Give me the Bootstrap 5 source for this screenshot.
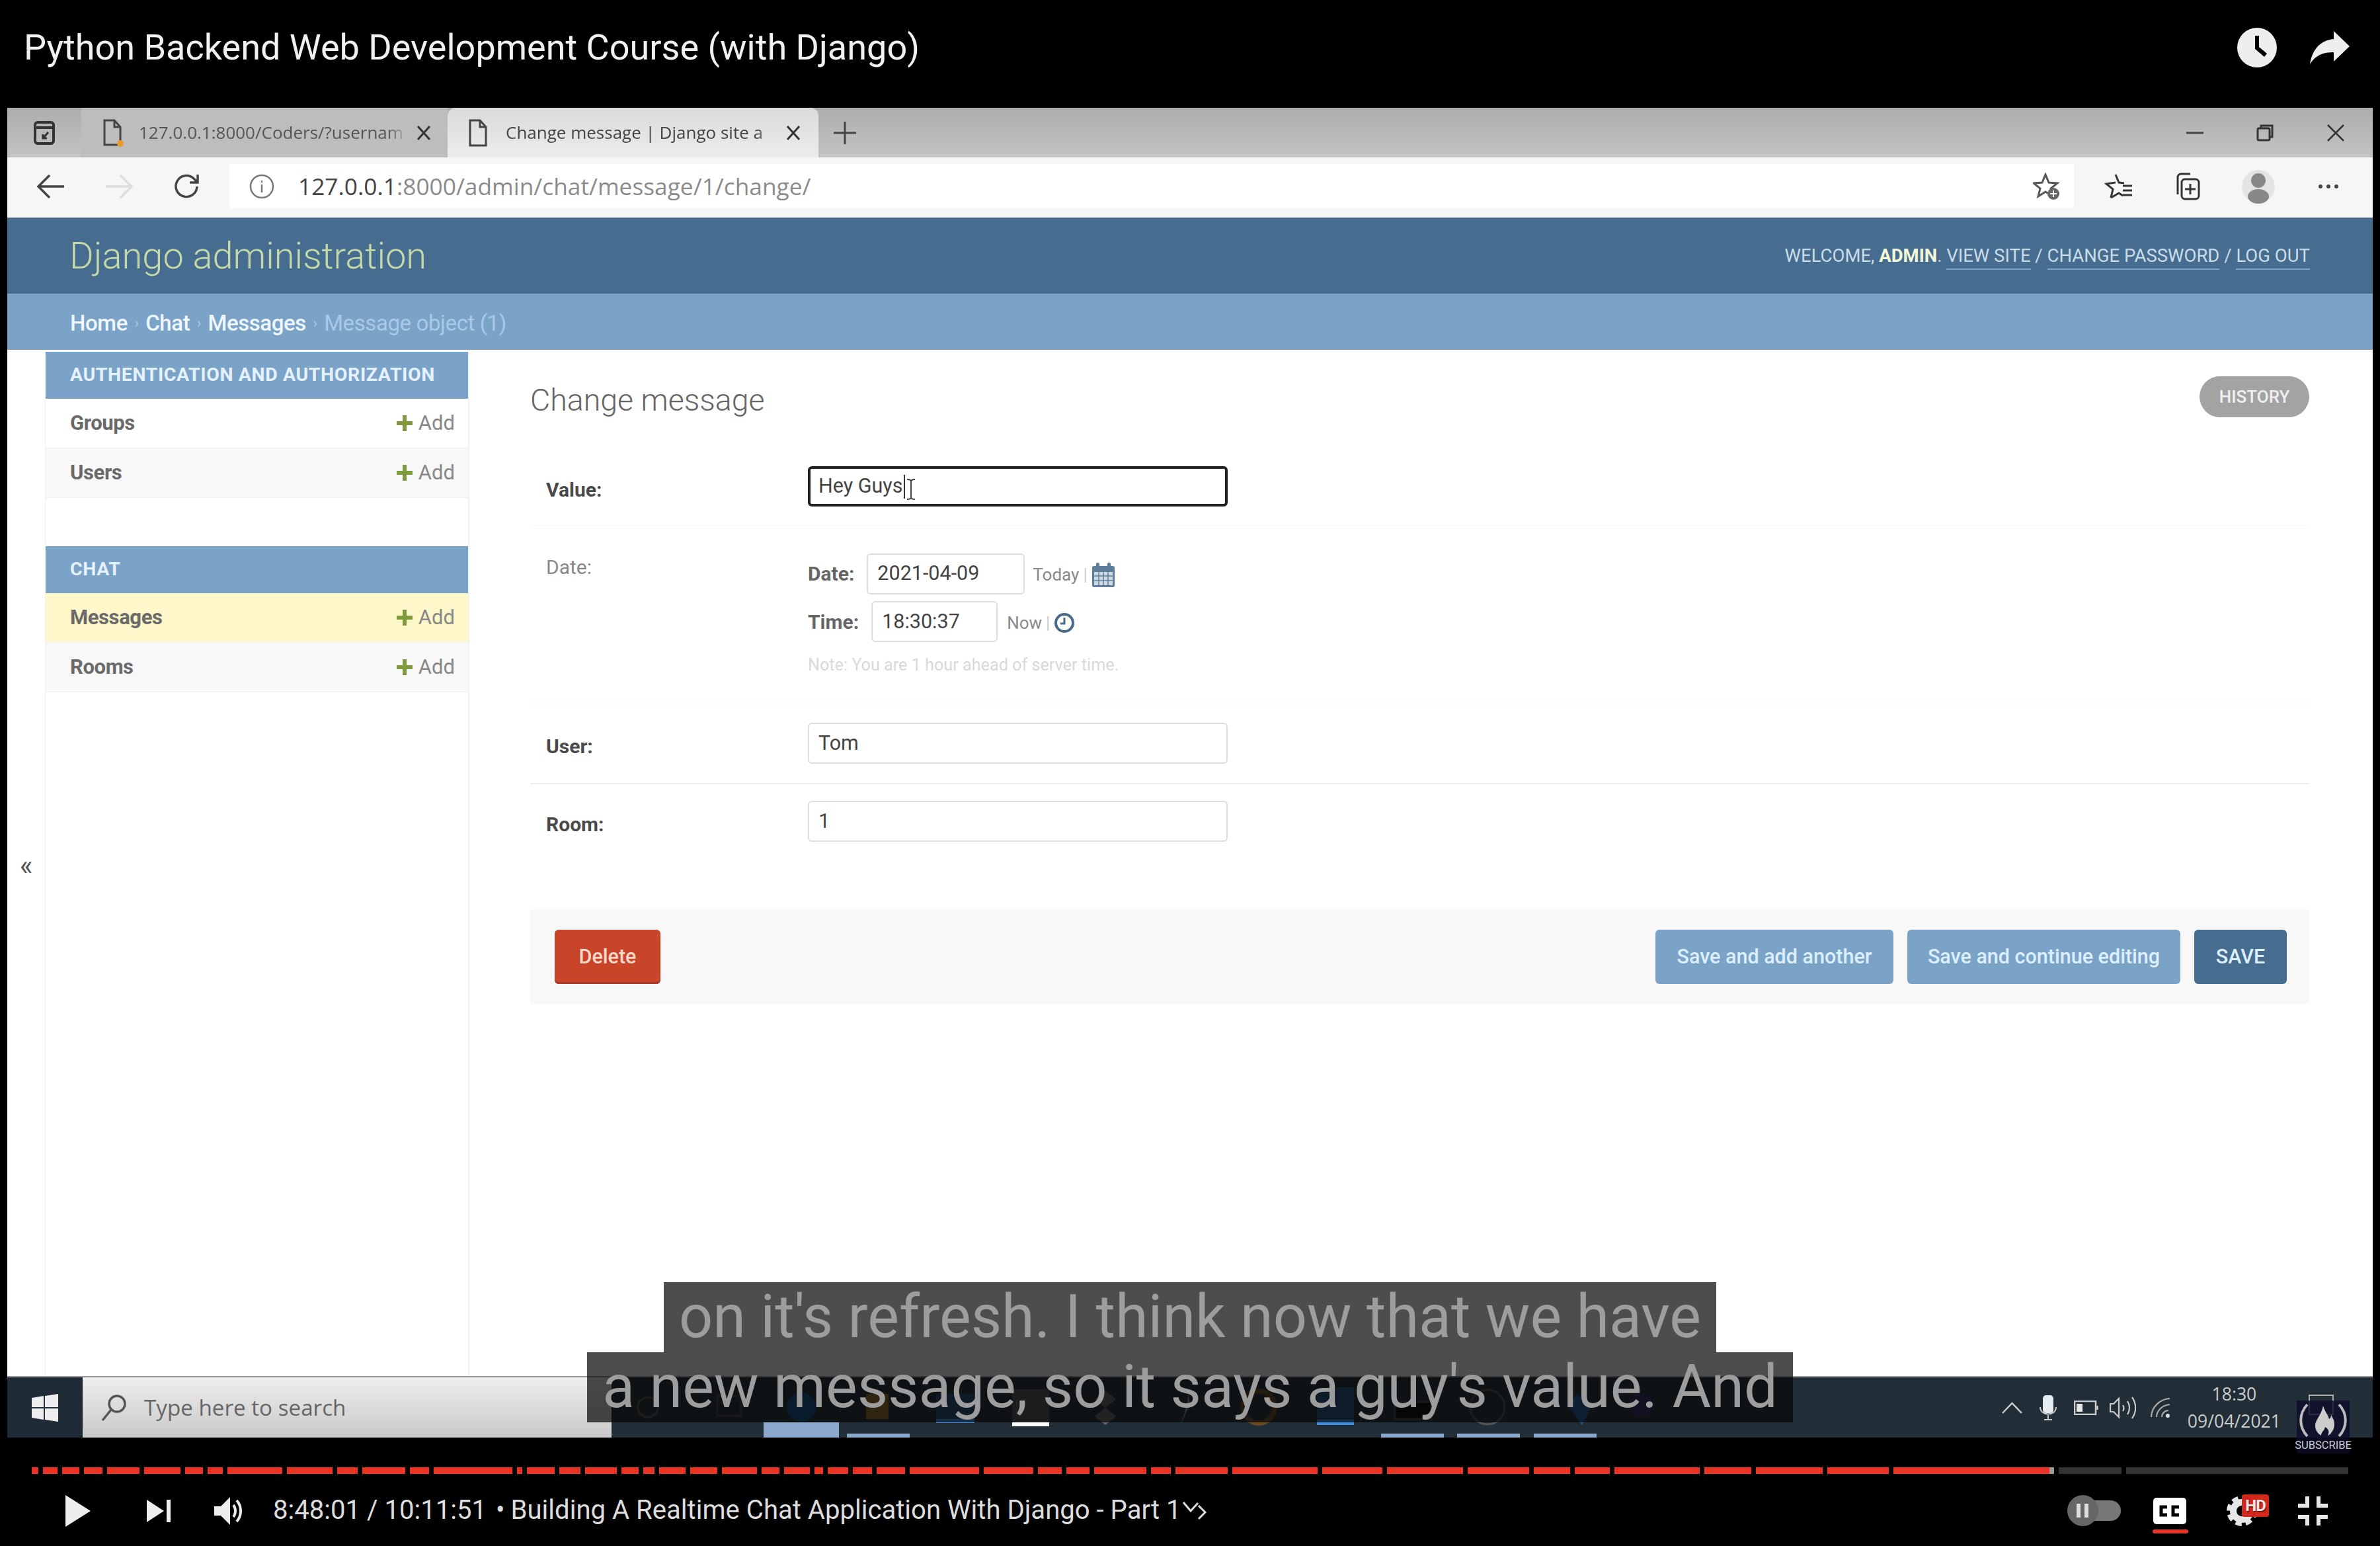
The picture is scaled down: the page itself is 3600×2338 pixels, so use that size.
<!DOCTYPE html>
<html lang="en">
<head>
<meta charset="utf-8">
<title>Python Backend Web Development Course (with Django)</title>
<link href="https://cdn.jsdelivr.net/npm/bootstrap@5.3.0/dist/css/bootstrap.min.css" rel="stylesheet">
<style>
html,body{margin:0;background:#000;}
body{width:3600px;height:2338px;overflow:hidden;font-family:Roboto,"Liberation Sans",sans-serif;position:relative;color:#444;}
.yt-title{height:163px;padding:0 36px 20px;color:#f1f1f1;font-size:54px;}
.yt-top-icons{gap:50px;padding-right:10px;}
.shell{margin:0 11px;height:2011px;background:#fff;}
.tabstrip{height:75px;background:linear-gradient(#adadad,#c4c4c4);}
.tabstrip-left{width:112px;padding-left:40px;}
.win-tab{height:75px;font-family:"Open Sans","Noto Sans",sans-serif;font-size:26px;color:#555;white-space:nowrap;}
.win-tab-off{width:554px;background:#bdbdbd;padding:0 25px 0 32px;}
.win-tab-on{width:561px;background:linear-gradient(#dadada,#ececec);border-radius:12px 12px 0 0;padding:0 27px 0 31px;color:#444;}
.tab-text{overflow:hidden;flex:1;margin:0 12px 0 23px;-webkit-mask-image:linear-gradient(90deg,#000 92%,transparent);mask-image:linear-gradient(90deg,#000 92%,transparent);}
.win-tab-on .tab-text{margin-left:27px;}
.new-tab{margin-left:23px;}
.win-btns{margin-left:auto;gap:80px;padding-right:42px;}
.addrbar{height:91px;background:#f6f6f6;padding:10px 0 14px;}
.nav-icons{width:336px;padding-left:44px;gap:59px;}
.urlbox{flex:1;background:#fff;font-family:"Open Sans","Noto Sans",sans-serif;font-size:35.3px;color:#8b8b8b;padding:0 20px 0 30px;}
.urlbox b{font-weight:400;color:#444;}
.url-info{margin-right:36px;}
.tool-icons{width:452px;gap:61px;padding-left:46px;}
.dj-head{height:115px;background:#466c8f;padding:0 95px 0 94px;}
.dj-brand{font-size:56px;font-weight:300;color:#c4d9a7;margin:0;line-height:1;}
.dj-user{font-size:27.5px;color:#c9dde8;text-transform:uppercase;white-space:nowrap;}
.dj-user strong{color:#f2f7d8;font-weight:700;}
.dj-user a{color:#c9dde8;text-decoration:none;border-bottom:2px solid #7aa3c7;padding-bottom:3px;}
.dj-crumb{height:85px;background:#7aa3c7;padding:4px 95px 0;font-size:33px;color:#a9c9e6;letter-spacing:-.4px;}
.dj-crumb a{color:#eef6ff;text-decoration:none;font-weight:500;}
.dj-crumb i{font-style:normal;font-size:22px;margin:0 10.5px;color:#a9c9e6;}
.dj-body{flex:1;min-height:0;}
.nav-toggle{width:58px;color:#555;font-size:42px;border-right:1px solid #f0f0f0;}
.toggle-mark{margin-top:748px;}
.side{width:641px;border-right:2px solid #f1f1f1;padding-top:3px;}
.side-head{height:71px;background:#7ba3c7;padding-left:37px;font-size:28.5px;font-weight:700;color:#e4f1ff;letter-spacing:.58px;text-transform:uppercase;}
.side-row{height:75px;padding:0 20px 0 37px;font-size:31px;font-weight:700;color:#6a6a6a;border-bottom:1px solid #f0f0f0;letter-spacing:-.4px;}
.side-row.even{background:#f8f8f8;}
.side-row.now{background:#fdf7c9;}
.side-add{font-weight:400;color:#888;letter-spacing:0;font-size:31px;gap:9px;}
.side-gap{height:73px;}
.dj-main{flex:1;padding:40px 96px 0 92px;min-width:0;}
.dj-h{font-size:46.5px;font-weight:300;color:#666;margin:10px 0 0;line-height:1;}
.hist-btn{height:62px;width:166px;padding:0;border:0;border-radius:31px;background:#a3a3a3;color:#f0f0f0;font-size:26px;font-weight:500;}
.fset{margin-top:74px;padding-left:24px;}
.frow{border-bottom:2px solid #fafafa;margin-left:-24px;padding-left:24px;}
.lab{width:396px;flex:none;font-size:30px;font-weight:700;color:#4a4a4a;}
.lab-thin{font-weight:400;color:#888;}
.frow-1{height:91px;}
.frow-1 .lab{margin-top:13px;}
.frow-2{height:269px;padding-top:41px;}
.frow-2 .lab{margin-top:-2px;}
.frow-3{height:121px;padding-top:28px;border-bottom-color:#eee;}
.frow-3 .lab{margin-top:13px;}
.frow-4{height:189px;padding-top:25px;border-bottom:0;}
.frow-4 .lab{margin-top:13px;}
.fld{width:635px;height:62px;padding:0 14px;border:2px solid #ddd;border-radius:6px;font-size:30.5px;color:#444;box-shadow:none;display:flex;align-items:center;background:#fff;line-height:1;}
.fld-on{height:61px;border:4px solid #222;padding:0 12px;}
.txt-caret{display:inline-block;width:2px;height:36px;background:#333;margin-left:1px;}
.ibeam{margin-left:2px;margin-top:8px;}
.dt-line{font-size:30px;font-weight:700;color:#666;}
.dt-line .fld{margin-left:16px;margin-right:14px;font-weight:400;}
.dt-date{height:61px;}
.dt-date .fld{width:239px;margin-left:19px;margin-right:12px;}
.dt-time{height:62px;margin-top:11px;}
.dt-time .fld{width:191px;margin-left:19px;}
.dt-link{font-size:26px;font-weight:400;color:#888;gap:6px;margin-top:4px;}
.dt-link em{font-style:normal;color:#ccc;}
.dt-note{font-size:25.2px;color:#d9d9d9;margin-top:16px;font-weight:400;}
.acts{height:143px;padding:0 34px 0 37px;background:#f8f8f8;}
.act-btn{height:82px;padding:0;border:0;border-radius:6px;font-size:30.5px;font-weight:500;color:#dcefff;}
.act-del{width:160px;background:#c8452a;color:#fdd8c8;box-shadow:inset 0 -3px 0 #a93a25;}
.act-a{width:360px;background:#7ba3c7;margin-right:21px;}
.act-b{width:413px;background:#7ba3c7;margin-right:21px;}
.act-s{width:140px;background:#466c8f;}
.taskbar{height:93px;background:#212e38;border-top:2px solid #999;position:relative;}
.win-start{width:114px;background:#1e2b36;}
.searchbox{width:800px;background:linear-gradient(#eeeeee,#c9c9c9);padding-left:27px;gap:26px;font-family:"Open Sans","Noto Sans",sans-serif;font-size:33.2px;color:#666;}
.tray{margin-left:auto;color:#ccc;padding-right:139px;}
.ti-26{margin-left:26px;}
.ti-17{margin-left:17px;}
.ti-21{margin-left:21px;}
.clock-box{font-family:"Open Sans","Noto Sans",sans-serif;font-size:26.6px;text-align:center;line-height:41px;white-space:nowrap;}
.apps{flex:1;min-width:0;}
.yt-foot{height:164px;padding-top:45px;}
.prog{height:10px;margin-left:48px;gap:7px;}
.seg{height:10px;background:#ea3323;flex:none;}
.seg-grey{background:#333;}
.seg-mix{background:linear-gradient(90deg,#ea3323 236px,#999 236px);}
.ctrls{height:109px;padding:2px 79px 0 99px;color:#ddd;}
.ctl-next{margin-left:85px;}
.ctl-vol{margin-left:66px;}
.ctrl-time{font-size:40.1px;margin-left:45px;white-space:nowrap;}
.ctrl-dot{margin:0 9px 0 14px;}
.ctl-chev{margin-left:2px;}
.ctrl-right{margin-left:auto;}
.ctl-cc{margin-left:49px;overflow:visible;}
.ctl-gear{margin-left:61px;}
.ctl-fs{margin-left:62px;}
.caps{position:absolute;left:0;right:0;top:1939px;}
.cap-line{height:106px;background:rgba(8,8,8,.72);color:#9d9d9d;font-size:90px;line-height:106px;padding:0 23px;white-space:nowrap;}
.notif-box{position:absolute;left:3492px;top:2109px;width:38px;height:31px;border:2px solid #aaa;}
.fcc-logo{position:absolute;left:3474px;top:2118px;width:80px;height:80px;background:rgba(12,12,40,.8);color:#ccc;font-size:16.5px;line-height:20px;padding-bottom:2px;}
.hd-tag{position:absolute;left:3391px;top:2260px;width:41px;height:34px;background:#d3271c;color:#f2e4e4;font-size:24px;font-weight:700;border-radius:4px;line-height:34px;text-align:center;letter-spacing:-1px;text-shadow:1px 2px 0 #7a1610;}
</style>
</head>
<body>
<header class="yt-title d-flex align-items-center justify-content-between">
  <div>Python Backend Web Development Course (with Django)</div>
  <div class="yt-top-icons d-flex align-items-center">
    <svg width="60" height="60" viewBox="0 0 60 60"><circle cx="30" cy="30" r="30" fill="#eee"/><path d="M27 12h6v17l12 10-4 5-14-12z" fill="#000"/></svg>
    <svg width="60" height="50" viewBox="0 0 60 50"><path d="M36 0l24 23-24 23V32C20 32 9 36 0 50 3 30 14 14 36 12z" fill="#eee"/></svg>
  </div>
</header>

<div class="shell d-flex flex-column">
  <div class="tabstrip d-flex">
    <div class="tabstrip-left d-flex align-items-center">
      <svg width="32" height="36" viewBox="0 0 32 36" fill="none" stroke="#333" stroke-width="4"><rect x="2" y="2" width="28" height="32" rx="4"/><path d="M2 10h28"/><path d="M22 17l-8 9m0-6v6h6" stroke-width="3"/></svg>
    </div>
    <div class="win-tab win-tab-off d-flex align-items-center">
      <svg width="32" height="44" viewBox="0 0 32 44" fill="none" stroke="#444" stroke-width="3"><path d="M3 3h15l9 10v27H3z"/><path d="M18 3v10h9"/><circle cx="27" cy="38" r="5" fill="#e89a2c" stroke="none"/></svg>
      <span class="tab-text">127.0.0.1:8000/Coders/?usernam</span>
      <svg width="22" height="24" viewBox="0 0 22 24" stroke="#333" stroke-width="3"><path d="M2 2l18 20M20 2L2 22"/></svg>
    </div>
    <div class="win-tab win-tab-on d-flex align-items-center">
      <svg width="30" height="44" viewBox="0 0 30 44" fill="none" stroke="#444" stroke-width="3"><path d="M3 3h15l9 10v28H3z"/><path d="M18 3v10h9"/></svg>
      <span class="tab-text">Change message | Django site a</span>
      <svg width="22" height="24" viewBox="0 0 22 24" stroke="#333" stroke-width="3"><path d="M2 2l18 20M20 2L2 22"/></svg>
    </div>
    <div class="new-tab d-flex align-items-center">
      <svg width="34" height="34" viewBox="0 0 34 34" stroke="#444" stroke-width="3"><path d="M17 0v34M0 17h34"/></svg>
    </div>
    <div class="win-btns d-flex align-items-center">
      <svg width="26" height="26" viewBox="0 0 26 26" stroke="#444" stroke-width="3"><path d="M0 13h26"/></svg>
      <svg width="26" height="26" viewBox="0 0 26 26" fill="none" stroke="#333" stroke-width="3"><rect x="2" y="6" width="18" height="18" rx="2"/><path d="M7 6V2h17v17h-4"/></svg>
      <svg width="28" height="28" viewBox="0 0 28 28" stroke="#333" stroke-width="2.5"><path d="M2 2l24 24M26 2L2 26"/></svg>
    </div>
  </div>

  <div class="addrbar d-flex">
    <div class="nav-icons d-flex align-items-center">
      <svg width="44" height="40" viewBox="0 0 44 40" fill="none" stroke="#444" stroke-width="3.5"><path d="M42 20H3M20 3L3 20l17 17"/></svg>
      <svg width="44" height="40" viewBox="0 0 44 40" fill="none" stroke="#ddd" stroke-width="3.5"><path d="M2 20h39M24 3l17 17-17 17"/></svg>
      <svg width="42" height="42" viewBox="0 0 42 42" fill="none" stroke="#444" stroke-width="3.5"><path d="M37 21a16 16 0 1 1-5-12l6 6M38 3v12H26"/></svg>
    </div>
    <div class="urlbox d-flex align-items-center">
      <svg class="url-info" width="38" height="38" viewBox="0 0 38 38" fill="none" stroke="#777" stroke-width="2.5"><circle cx="19" cy="19" r="17"/><path d="M19 16v12M19 10v3"/></svg>
      <span><b>127.0.0.1</b>:8000/admin/chat/message/1/change/</span>
      <svg class="ms-auto" width="42" height="42" viewBox="0 0 42 42" fill="none" stroke="#555" stroke-width="3"><path d="M19 3l5 12 13 1-10 8 3 12-11-7-11 7 3-12L1 16l13-1z"/><circle cx="31" cy="32" r="9" fill="#666" stroke="none"/><path d="M31 27v10M26 32h10" stroke="#fff" stroke-width="2"/></svg>
    </div>
    <div class="tool-icons d-flex align-items-center">
      <svg width="44" height="42" viewBox="0 0 44 42" fill="none" stroke="#333" stroke-width="3"><path d="M17 3l5 12 8 1M10 38l3-13-10-8 14-2M10 38l12-7 6 4"/><path d="M28 20h14M28 27h14M28 34h14"/></svg>
      <svg width="42" height="44" viewBox="0 0 42 44" fill="none" stroke="#333" stroke-width="3"><path d="M6 34V8a5 5 0 0 1 5-5h14"/><rect x="12" y="11" width="26" height="30" rx="5"/><path d="M25 18v16M17 26h16"/></svg>
      <svg width="50" height="56" viewBox="0 0 50 56"><circle cx="25" cy="28" r="25" fill="#e4e4e4"/><circle cx="25" cy="19" r="11" fill="#888"/><ellipse cx="25" cy="43" rx="16" ry="11" fill="#888"/></svg>
      <svg class="ms-1" width="32" height="8" viewBox="0 0 32 8" fill="#444"><circle cx="4" cy="4" r="3"/><circle cx="16" cy="4" r="3"/><circle cx="28" cy="4" r="3"/></svg>
    </div>
  </div>

  <div class="dj-head d-flex align-items-center justify-content-between">
    <h1 class="dj-brand">Django administration</h1>
    <div class="dj-user">Welcome, <strong>admin</strong>. <a href="#">View site</a> / <a href="#">Change password</a> / <a href="#">Log out</a></div>
  </div>
  <div class="dj-crumb d-flex align-items-center">
    <a href="#">Home</a><i>›</i><a href="#">Chat</a><i>›</i><a href="#">Messages</a><i>›</i><span>Message object (1)</span>
  </div>

  <div class="dj-body d-flex">
    <div class="nav-toggle text-center"><div class="toggle-mark">«</div></div>
    <aside class="side">
      <div class="side-head d-flex align-items-center">Authentication and Authorization</div>
      <div class="side-row d-flex align-items-center justify-content-between"><span>Groups</span>
        <span class="side-add d-flex align-items-center"><svg width="24" height="24" viewBox="0 0 24 24" fill="#7f9a3c"><path d="M9 0h6v9h9v6h-9v9H9v-9H0V9h9z"/></svg>Add</span></div>
      <div class="side-row even d-flex align-items-center justify-content-between"><span>Users</span>
        <span class="side-add d-flex align-items-center"><svg width="24" height="24" viewBox="0 0 24 24" fill="#7f9a3c"><path d="M9 0h6v9h9v6h-9v9H9v-9H0V9h9z"/></svg>Add</span></div>
      <div class="side-gap"></div>
      <div class="side-head d-flex align-items-center">Chat</div>
      <div class="side-row now d-flex align-items-center justify-content-between"><span>Messages</span>
        <span class="side-add d-flex align-items-center"><svg width="24" height="24" viewBox="0 0 24 24" fill="#7f9a3c"><path d="M9 0h6v9h9v6h-9v9H9v-9H0V9h9z"/></svg>Add</span></div>
      <div class="side-row even d-flex align-items-center justify-content-between"><span>Rooms</span>
        <span class="side-add d-flex align-items-center"><svg width="24" height="24" viewBox="0 0 24 24" fill="#7f9a3c"><path d="M9 0h6v9h9v6h-9v9H9v-9H0V9h9z"/></svg>Add</span></div>
    </aside>
    <main class="dj-main">
      <div class="d-flex align-items-center justify-content-between">
        <h2 class="dj-h">Change message</h2>
        <button class="btn hist-btn" type="button">HISTORY</button>
      </div>
      <div class="fset">
        <div class="frow frow-1 d-flex align-items-start">
          <div class="lab">Value:</div>
          <div class="form-control fld fld-on">Hey Guys<span class="txt-caret"></span>
            <svg class="ibeam" width="14" height="32" viewBox="0 0 14 32" fill="none" stroke="#444" stroke-width="2"><path d="M1 1c3 0 6 1 6 3v24c0 2 3 3 6 3M13 1c-3 0-6 1-6 3v24c0 2-3 3-6 3"/></svg>
          </div>
        </div>
        <div class="frow frow-2 d-flex align-items-start">
          <div class="lab lab-thin">Date:</div>
          <div class="dt-line">
            <div class="dt-date d-flex align-items-center">Date:
              <div class="form-control fld">2021-04-09</div>
              <div class="dt-link d-flex align-items-center">Today <em>|</em>
                <svg width="36" height="38" viewBox="0 0 36 38"><rect x="1" y="5" width="34" height="32" rx="3" fill="#5d7d9b"/><rect x="4" y="14" width="28" height="20" fill="#cdd8e2"/><path d="M4 20h28M4 27h28M11 14v20M18 14v20M25 14v20" stroke="#5d7d9b" stroke-width="1.5"/><rect x="7" y="0" width="5" height="9" rx="2" fill="#5d7d9b"/><rect x="24" y="0" width="5" height="9" rx="2" fill="#5d7d9b"/></svg>
              </div>
            </div>
            <div class="dt-time d-flex align-items-center">Time:
              <div class="form-control fld">18:30:37</div>
              <div class="dt-link d-flex align-items-center">Now <em>|</em>
                <svg width="32" height="32" viewBox="0 0 32 32" fill="none" stroke="#47698a" stroke-width="4"><circle cx="16" cy="16" r="13"/><path d="M16 8v9h-6" stroke-width="3"/></svg>
              </div>
            </div>
            <div class="dt-note">Note: You are 1 hour ahead of server time.</div>
          </div>
        </div>
        <div class="frow frow-3 d-flex align-items-start">
          <div class="lab">User:</div>
          <div class="form-control fld">Tom</div>
        </div>
        <div class="frow frow-4 d-flex align-items-start">
          <div class="lab">Room:</div>
          <div class="form-control fld">1</div>
        </div>
      </div>
      <div class="acts d-flex align-items-center">
        <button class="btn act-btn act-del" type="button">Delete</button>
        <button class="btn act-btn act-a ms-auto" type="button">Save and add another</button>
        <button class="btn act-btn act-b" type="button">Save and continue editing</button>
        <button class="btn act-btn act-s" type="button">SAVE</button>
      </div>
    </main>
  </div>

  <footer class="taskbar d-flex">
    <div class="win-start d-flex align-items-center justify-content-center">
      <svg width="40" height="42" viewBox="0 0 40 42" fill="#eee"><path d="M0 6l18-3v17H0zM20 3l20-3v20H20zM0 22h18v17L0 36zM20 22h20v20l-20-3z"/></svg>
    </div>
    <div class="searchbox d-flex align-items-center">
      <svg width="40" height="42" viewBox="0 0 40 42" fill="none" stroke="#555" stroke-width="3.5"><circle cx="25" cy="15" r="12"/><path d="M16 24L3 40"/></svg>
      <span>Type here to search</span>
    </div>
    <div class="apps">
      <svg width="1600" height="91" viewBox="0 0 1600 91">
        <circle cx="55" cy="45" r="15" fill="none" stroke="#555" stroke-width="3"/>
        <path d="M160 28h36v30h-36z" fill="none" stroke="#444" stroke-width="3"/>
        <rect x="230" y="68" width="114" height="23" fill="#8aa8cc"/>
        <circle cx="287" cy="45" r="22" fill="#0d4d8a"/>
        <rect x="356" y="85" width="95" height="6" fill="#8aa8cc"/>
        <rect x="385" y="25" width="34" height="38" fill="#c98f24" opacity=".7"/>
        <rect x="491" y="62" width="58" height="7" fill="#3d8be0"/>
        <rect x="491" y="25" width="58" height="38" fill="#1d5f9a" opacity=".6"/>
        <rect x="606" y="18" width="56" height="50" fill="#555"/>
        <rect x="606" y="68" width="56" height="6" fill="#fff"/>
        <path d="M747 20l16 13-16 13-16-13zM747 46l16 13-16 13-16-13z" fill="#666"/>
        <path d="M873 25l-6 28-6 18 14-30z" fill="#888"/>
        <circle cx="979" cy="45" r="24" fill="none" stroke="#6a4a24" stroke-width="8"/>
        <rect x="1067" y="15" width="56" height="50" fill="#1e5a94" opacity=".8"/>
        <rect x="1067" y="64" width="56" height="8" fill="#3d8be0"/>
        <rect x="1164" y="85" width="95" height="6" fill="#8aa8cc"/>
        <rect x="1279" y="85" width="95" height="6" fill="#8aa8cc"/>
        <rect x="1395" y="85" width="95" height="6" fill="#8aa8cc"/>
        <rect x="1185" y="37" width="55" height="26" fill="#000" stroke="#444" stroke-width="3"/>
        <circle cx="1325" cy="45" r="26" fill="none" stroke="#555" stroke-width="3"/>
        <path d="M1460 25l22 20-14 27-20-27z" fill="#1a5a96"/>
        <circle cx="1558" cy="42" r="18" fill="#2a2a66"/>
      </svg>
    </div>
    <div class="tray d-flex align-items-center">
      <svg width="31" height="18" viewBox="0 0 31 18" fill="none" stroke="#ccc" stroke-width="2.5"><path d="M1 17L15.500 2 30 17"/></svg>
      <svg class="ti-26" width="26" height="38" viewBox="0 0 26 38" fill="none"><rect x="5" y="0" width="16" height="27" rx="5" fill="#e6ecef"/><path d="M1 18c0 14 24 14 24 0M13 30v6M7 37h12" stroke="#ccc" stroke-width="2"/></svg>
      <svg class="ti-26" width="37" height="22" viewBox="0 0 37 22" fill="none" stroke="#ccc" stroke-width="2.500"><rect x="1" y="1" width="32" height="20"/><path d="M35.500 8v6"/><rect x="4" y="5" width="9" height="12" fill="#e6e6e6" stroke="none"/></svg>
      <svg class="ti-17" width="40" height="36" viewBox="0 0 40 36" fill="none" stroke="#ccc" stroke-width="2.200"><path d="M1 12h5l8-8v28l-8-8H1z"/><path d="M20 14c2 3 2 6 0 9M27 8c4 6 4 14 0 20M34 2c7 10 7 22 0 32"/></svg>
      <svg class="ti-21" width="31" height="30" viewBox="0 0 31 30" fill="none" stroke="#aaa" stroke-width="2.200"><path d="M2 29C2 15 14 2 30 1M10 29c0-9 8-18 20-19M18 29c0-5 4-10 10-10"/><circle cx="27" cy="27" r="3" fill="#ddd" stroke="none"/></svg>
      <div class="clock-box ti-26"><div>18:30</div><div>09/04/2021</div></div>
    </div>
  </footer>
</div>

<div class="yt-foot">
  <div class="prog d-flex">
    <div class="seg" style="width:10px"></div><div class="seg" style="width:22px"></div><div class="seg" style="width:26px"></div><div class="seg" style="width:28px"></div><div class="seg" style="width:49px"></div><div class="seg" style="width:55px"></div><div class="seg" style="width:27px"></div><div class="seg" style="width:23px"></div><div class="seg" style="width:83px"></div><div class="seg" style="width:69px"></div><div class="seg" style="width:31px"></div><div class="seg" style="width:65px"></div><div class="seg" style="width:29px"></div><div class="seg" style="width:119px"></div><div class="seg" style="width:8px"></div><div class="seg" style="width:42px"></div><div class="seg" style="width:32px"></div><div class="seg" style="width:48px"></div><div class="seg" style="width:26px"></div><div class="seg" style="width:17px"></div><div class="seg" style="width:40px"></div><div class="seg" style="width:41px"></div><div class="seg" style="width:53px"></div><div class="seg" style="width:27px"></div><div class="seg" style="width:39px"></div><div class="seg" style="width:13px"></div><div class="seg" style="width:31px"></div><div class="seg" style="width:29px"></div><div class="seg" style="width:43px"></div><div class="seg" style="width:105px"></div><div class="seg" style="width:75px"></div><div class="seg" style="width:36px"></div><div class="seg" style="width:35px"></div><div class="seg" style="width:79px"></div><div class="seg" style="width:30px"></div><div class="seg" style="width:79px"></div><div class="seg" style="width:129px"></div><div class="seg" style="width:91px"></div><div class="seg" style="width:115px"></div><div class="seg" style="width:93px"></div><div class="seg" style="width:55px"></div><div class="seg" style="width:53px"></div><div class="seg" style="width:129px"></div><div class="seg" style="width:71px"></div><div class="seg" style="width:101px"></div><div class="seg" style="width:93px"></div><div class="seg seg-mix" style="width:243px"></div><div class="seg seg-grey" style="width:95px"></div><div class="seg seg-grey" style="width:336px"></div>
  </div>
  <div class="ctrls d-flex align-items-center">
    <svg width="38" height="48" viewBox="0 0 38 48" fill="#eee"><path d="M0 0l38 24L0 48z"/></svg>
    <svg class="ctl-next" width="36" height="34" viewBox="0 0 36 34" fill="#eee"><path d="M0 0l26 17L0 34z"/><rect x="30" y="0" width="6" height="34"/></svg>
    <svg class="ctl-vol" width="44" height="42" viewBox="0 0 44 42" fill="#eee"><path d="M0 14h10L24 0v42L10 28H0z"/><path d="M29 12c4 5 4 13 0 18" fill="none" stroke="#eee" stroke-width="4"/><path d="M34 5c8 9 8 23 0 32" fill="none" stroke="#eee" stroke-width="4"/></svg>
    <div class="ctrl-time"><span>8:48:01 / 10:11:51</span><span class="ctrl-dot">•</span><span>Building A Realtime Chat Application With Django - Part 1</span></div>
    <svg class="ctl-chev" width="36" height="28" viewBox="0 0 36 28" fill="none" stroke="#ddd" stroke-width="3"><path d="M1 1l11 13L23 2M24 6l10 10-10 10"/></svg>
    <div class="ctrl-right d-flex align-items-center">
      <svg width="81" height="47" viewBox="0 0 81 47"><rect x="15" y="8" width="66" height="31" rx="15.500" fill="#777"/><circle cx="23.500" cy="23.500" r="23.500" fill="#666"/><path d="M14 13h6v21h-6zM26 13h6v21h-6z" fill="#ddd"/></svg>
      <svg class="ctl-cc" width="50" height="40" viewBox="0 0 50 40"><rect width="50" height="40" rx="5" fill="#fff"/><path d="M21 14h-9v12h9M39 14h-9v12h9" fill="none" stroke="#000" stroke-width="5"/><rect x="-1" y="48" width="54" height="6" rx="3" fill="#ea3323"/></svg>
      <svg class="ctl-gear" width="46" height="46" viewBox="0 0 46 46" fill="none" stroke="#e6e6e6"><circle cx="23" cy="23" r="13" stroke-width="10"/><circle cx="23" cy="23" r="19" stroke-width="8" stroke-dasharray="9 5.920"/></svg>
      <svg class="ctl-fs" width="45" height="44" viewBox="0 0 45 44" fill="#e6e6e6"><path d="M11 0h6v17H0v-6h11zM28 0h6v11h11v6H28zM0 28h17v16h-6V34H0zM28 28h17v6H34v10h-6z"/></svg>
    </div>
  </div>
</div>

<div class="caps d-flex flex-column align-items-center">
  <div class="cap-line">on it's refresh. I think now that we have</div>
  <div class="cap-line">a new message, so it says a guy's value. And</div>
</div>
<div class="notif-box"></div>
<div class="fcc-logo d-flex flex-column align-items-center justify-content-end">
  <svg width="76" height="56" viewBox="0 0 76 56" fill="none" stroke="#bbb" stroke-width="4"><path d="M14 4C1 18 1 38 14 52M62 4c13 14 13 34 0 48"/><path d="M38 6c3 10 8 14 9 20 2-2 3-3 3-6 5 8 6 12 4 20-2 6-6 10-9 11 3-6 1-10-4-13-1 6-6 7-6 13-5-3-9-8-9-15 0-9 9-15 12-30z" fill="#ccc" stroke="none"/></svg>
  <div>SUBSCRIBE</div>
</div>
<div class="hd-tag">HD</div>
</body>
</html>
